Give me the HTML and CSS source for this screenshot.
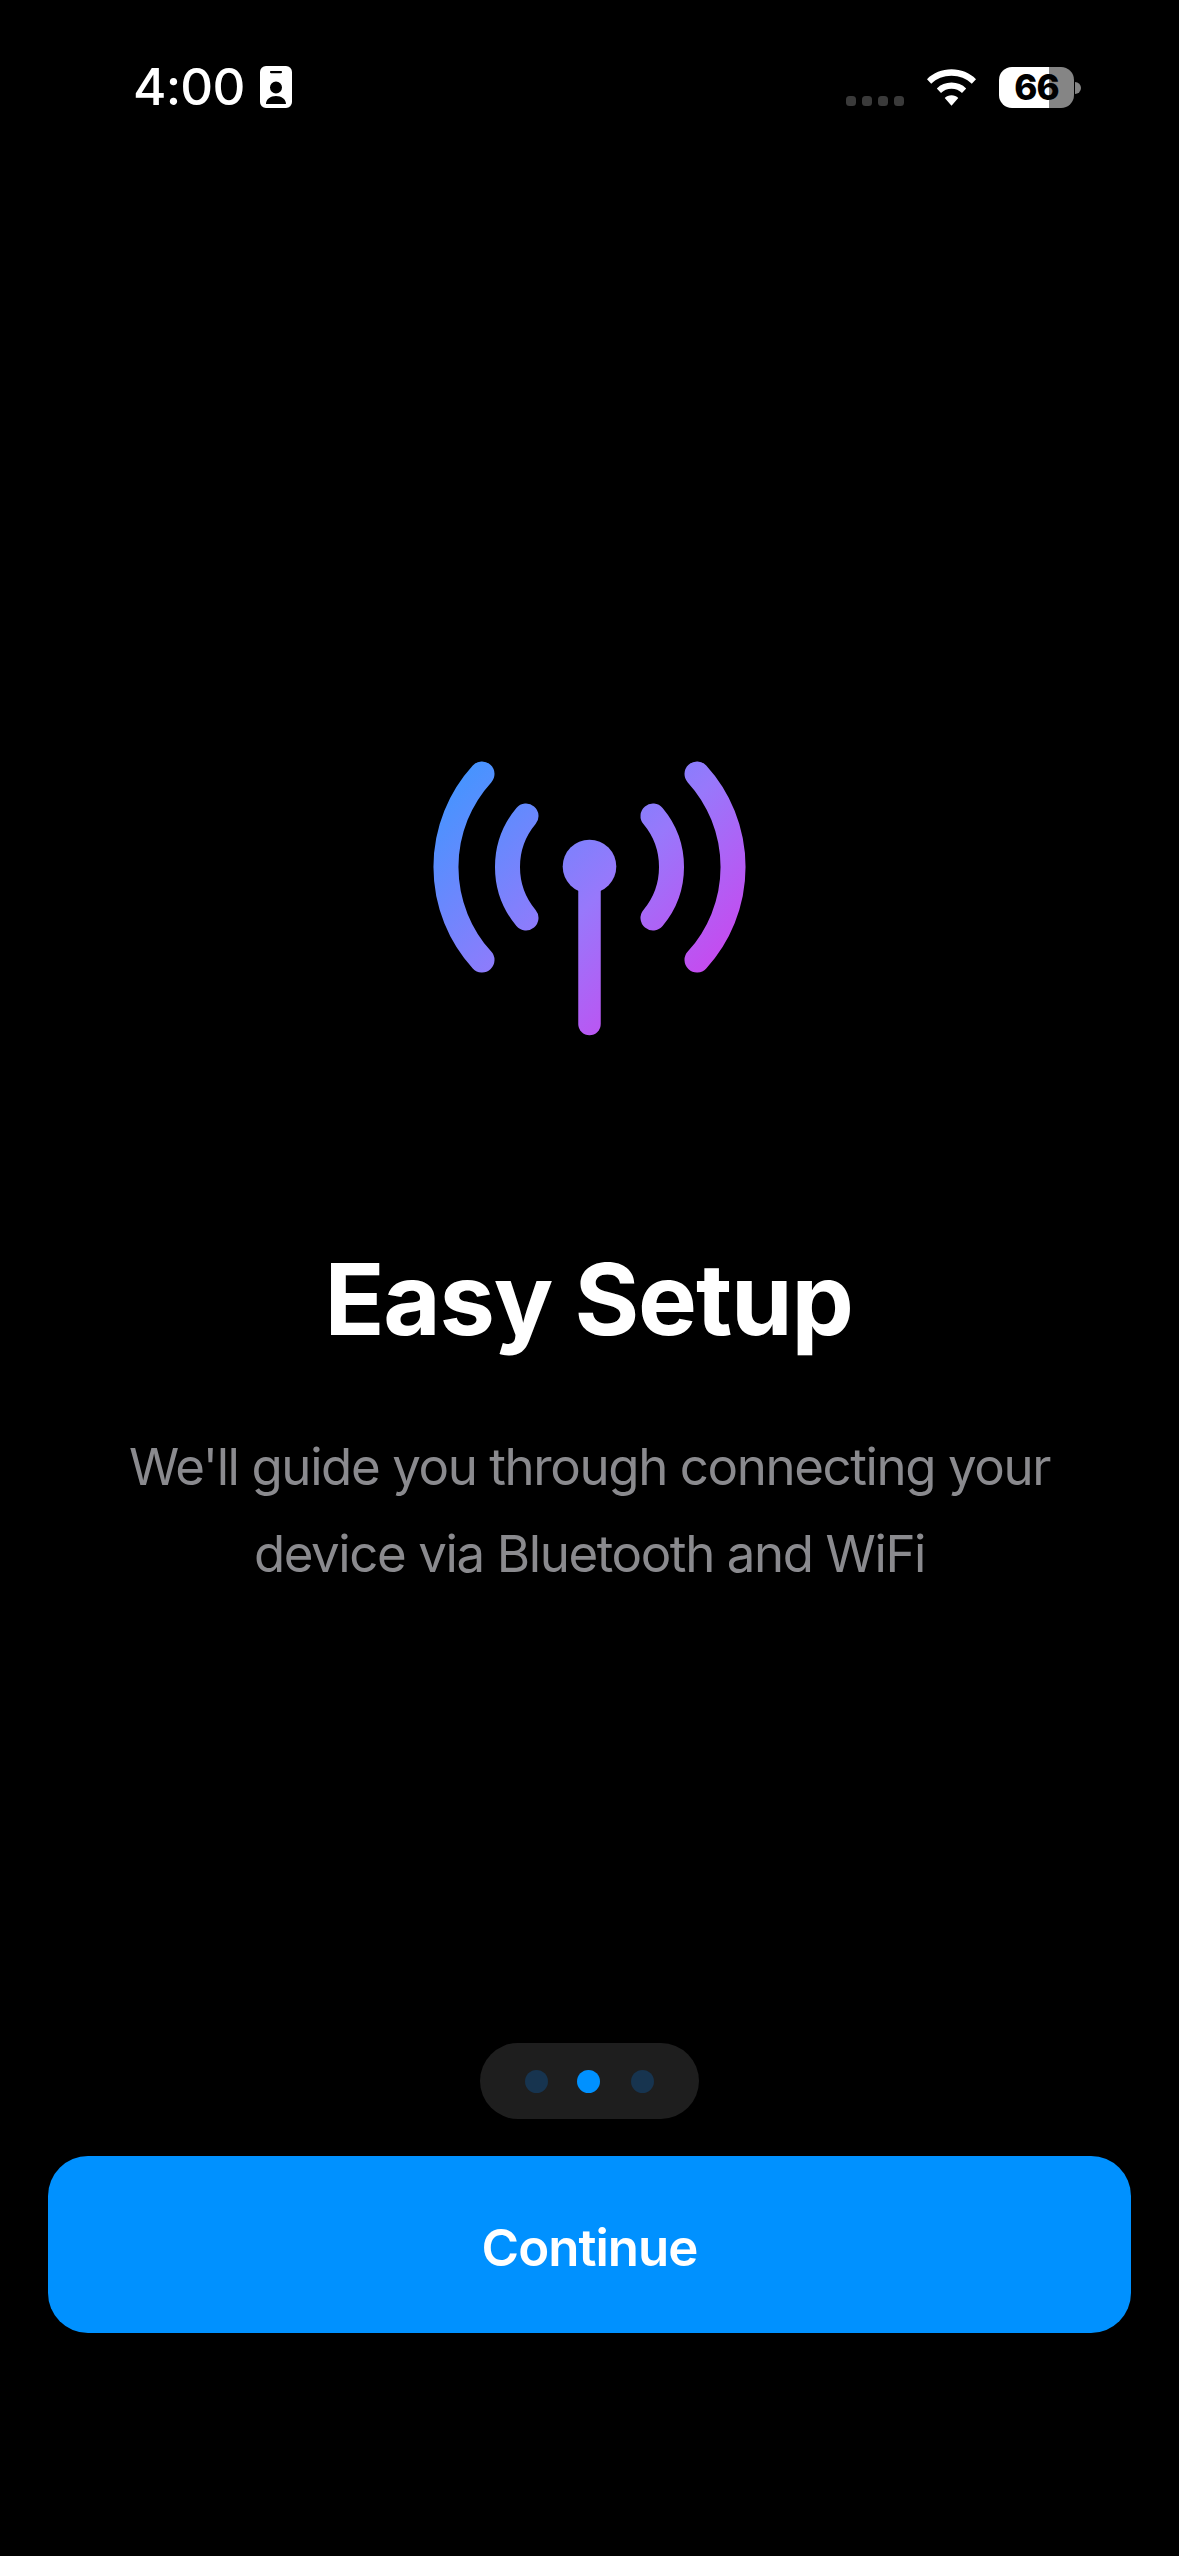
FILE: index.html
```html
<!DOCTYPE html>
<html lang="en">
<head>
<meta charset="utf-8">
<title>Easy Setup</title>
<link rel="stylesheet" href="styles.css">
</head>
<body>
<div class="screen">
  <header class="status">
    <div class="status-left">
      <span class="time">4:00</span>
      <svg class="badge" width="32" height="42" viewBox="0 0 32 42"><path fill="#fff" fill-rule="evenodd" d="M6 0h20a6 6 0 0 1 6 6v30a6 6 0 0 1-6 6H6a6 6 0 0 1-6-6V6a6 6 0 0 1 6-6zM11 5a1 1 0 0 0 0 2.200h10a1 1 0 0 0 0-2.200zM16 15.500a6 6 0 1 0 0 12a6 6 0 0 0 0-12zM6 38h20c0-4.800-4.500-8-10-8s-10 3.200-10 8z"/></svg>
    </div>
    <div class="status-right">
      <div class="signal"><i></i><i></i><i></i><i></i></div>
      <svg class="wifi" width="49" height="37" viewBox="0 0 50 37"><path fill="#fff" d="M25 0c9.700 0 18.500 3.700 25 10l-4.300 4.600C40.300 9.500 33 6.500 25 6.500S9.700 9.500 4.300 14.600L0 10C6.500 3.700 15.300 0 25 0zM25 13.500c5.800 0 11 2.200 15 5.900l-4.300 4.600c-2.800-2.600-6.500-4.200-10.700-4.200s-7.900 1.600-10.700 4.200L10 19.400c4-3.700 9.200-5.900 15-5.900zM25 26.500c2.700 0 5.100 1 6.900 2.700L25 37l-6.900-7.800c1.800-1.700 4.200-2.700 6.900-2.700z"/></svg>
      <div class="battery"><div class="battery-body"><span class="battery-num">66</span></div><div class="battery-cap"></div></div>
    </div>
  </header>

  <main class="content">
    <svg class="hero" width="330" height="290" viewBox="425 755 330 290" fill="none">
      <defs>
        <linearGradient id="g" gradientUnits="userSpaceOnUse" x1="434" y1="762" x2="732" y2="1060">
          <stop offset="0" stop-color="#3A98FF"/>
          <stop offset="0.5" stop-color="#9878FB"/>
          <stop offset="1" stop-color="#E030E8"/>
        </linearGradient>
      </defs>
      <g stroke="url(#g)" stroke-width="25" stroke-linecap="round">
        <path d="M482 774A138 138 0 0 0 482 960"/>
        <path d="M526 816A79.500 79.500 0 0 0 526 918"/>
        <path d="M653 816A79.500 79.500 0 0 1 653 918"/>
        <path d="M697 774A138 138 0 0 1 697 960"/>
        <path stroke-width="22.500" d="M589.500 867V1024"/>
      </g>
      <circle cx="589.500" cy="866.500" r="26.800" fill="url(#g)"/>
    </svg>
    <h1 class="title">Easy Setup</h1>
    <p class="desc">We'll guide you through connecting your<br>device via Bluetooth and WiFi</p>
  </main>

  <footer class="footer">
    <div class="pager"><i class="dot"></i><i class="dot active"></i><i class="dot last"></i></div>
    <button class="cta">Continue</button>
  </footer>
</div>
</body>
</html>
```
FILE: styles.css
```css
* { box-sizing: border-box; }
html, body { margin: 0; padding: 0; background: #000; }
.screen {
  width: 1179px;
  height: 2556px;
  background: #000;
  color: #fff;
  font-family: Inter, "Liberation Sans", sans-serif;
  display: flex;
  flex-direction: column;
  overflow: hidden;
}
.status {
  height: 134px;
  padding: 64px 98px 0 133px;
  display: flex;
  justify-content: space-between;
  align-items: flex-start;
  flex: none;
}
.status-left { display: flex; align-items: center; gap: 15px; height: 46px; }
.time { font-size: 51px; font-weight: 500; line-height: 46px; letter-spacing: -0.8px; }
.badge { display: block; }
.status-right { display: flex; align-items: flex-start; height: 46px; }
.signal { display: flex; gap: 6px; margin-top: 32px; margin-right: 23px; }
.signal i { width: 10px; height: 10px; border-radius: 3.500px; background: #3a3a3a; display: block; }
.wifi { display: block; margin-top: 5px; margin-right: 23px; }
.battery { display: flex; align-items: center; margin-top: 3px; }
.battery-body {
  width: 75px; height: 41px; border-radius: 13px;
  background: linear-gradient(90deg, #fff 50px, #858585 50px);
  display: flex; align-items: center; justify-content: center;
}
.battery-num { color: #000; font-size: 35px; font-weight: 800; line-height: 41px; letter-spacing: -1px; }
.battery-cap { width: 6px; height: 12px; margin-left: 1px; border-radius: 0 6px 6px 0; background: #858585; }

.content {
  flex: none;
  height: 1909px;
  padding-top: 621px;
  display: flex;
  flex-direction: column;
  align-items: center;
}
.hero { display: block; flex: none; }
.title {
  margin: 194px 0 0;
  padding-right: 2px;
  font-size: 99px;
  font-weight: 700;
  line-height: 120px;
  letter-spacing: -1.2px;
  text-align: center;
}
.desc {
  margin: 64px 0 0;
  font-size: 51px;
  font-weight: 400;
  line-height: 87px;
  letter-spacing: -1.4px;
  color: #8a8a8e;
  text-align: center;
}
.footer {
  flex: none;
  display: flex;
  flex-direction: column;
  align-items: center;
  gap: 37px;
}
.pager {
  width: 219px;
  height: 76px;
  border-radius: 38px;
  background: #1e1e1e;
  display: flex;
  align-items: center;
  justify-content: center;
  gap: 29px;
}
.dot { width: 23px; height: 23px; border-radius: 50%; background: #17344f; display: block; }
.dot.active { background: #0091ff; }
.dot.last { margin-left: 2px; }
.cta {
  width: 1083px;
  height: 177px;
  padding: 5px 0 0;
  border: 0;
  border-radius: 40px;
  background: #0091ff;
  color: #fff;
  font-family: inherit;
  font-size: 51px;
  font-weight: 600;
  letter-spacing: -1px;
}
```
